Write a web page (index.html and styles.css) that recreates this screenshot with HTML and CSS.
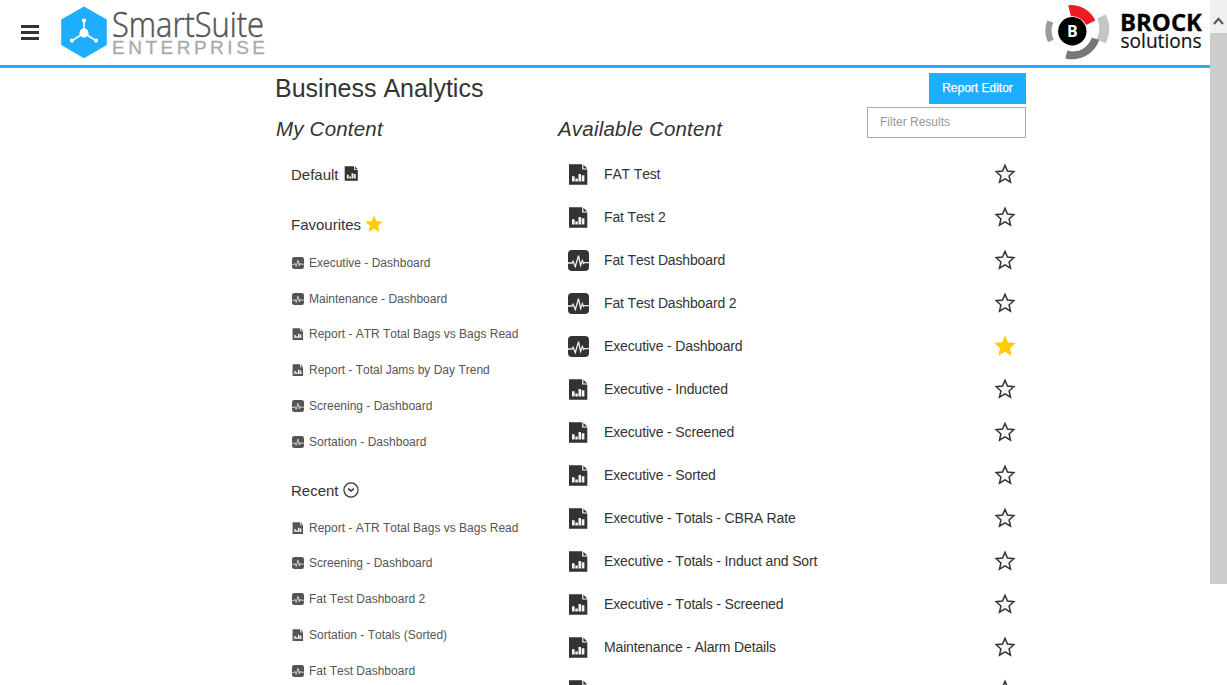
FILE: index.html
```html
<!DOCTYPE html>
<html lang="en">
<head>
<meta charset="utf-8">
<title>Business Analytics</title>
<link rel="stylesheet" href="styles.css">
</head>
<body>
<svg class="sprite" aria-hidden="true">
  <symbol id="doc" viewBox="0 0 21 21">
    <path d="M1 .3H14.2V5.6H19.3V20.8H1Z" fill="currentColor"/>
    <path d="M15.4 .8L19.3 4.6H15.4Z" fill="currentColor"/>
    <path d="M4 12.3H6.6V17.5H4ZM7.3 14.6H9.8V17.5H7.3ZM10.5 10H13V17.5H10.5ZM13.7 11.3H16.4V17.5H13.7Z" fill="#f4f4f4"/>
  </symbol>
  <symbol id="dash" viewBox="0 0 21 21">
    <rect width="21" height="21" rx="4" fill="currentColor"/>
    <path d="M0 13H4L5 11.2L7.3 16.5L10.5 5.6L12.6 15.5L14.4 10.6L15.6 13.5L16.6 12.6H21" fill="none" stroke="#eee" stroke-width="1.3"/>
  </symbol>
  <symbol id="star" viewBox="0 0 22 22">
    <path d="M11 2.4L13.5 8.1L19.8 8.7L15.1 12.9L16.5 19.2L11 15.9L5.5 19.2L6.9 12.9L2.2 8.7L8.5 8.1Z" stroke-width="1.5"/>
  </symbol>
</svg>
<header class="topbar">
  <div class="brand">
    <span class="menu"><i></i><i></i><i></i></span>
    <svg class="suite" width="206" height="58" viewBox="0 0 206 58">
      <path d="M24 3.5L46.8 16.5V42L24 55.3L1.2 42V16.5Z" fill="#1fadff"/>
      <g stroke="#fff" stroke-width="1.6" fill="#fff"><path d="M24 30V17M24 30L12.3 37.5M24 30L35.7 37.5"/><circle cx="24" cy="30" r="3.8"/><circle cx="24" cy="17.6" r="1.3"/><circle cx="12" cy="37.6" r="1.3"/><circle cx="36" cy="37.6" r="1.3"/></g>
      <text class="suite-name" x="52" y="33.5" textLength="152" lengthAdjust="spacingAndGlyphs">SmartSuite</text>
      <text class="suite-sub" x="52" y="50.5" textLength="153" lengthAdjust="spacing">ENTERPRISE</text>
    </svg>
  </div>
  <svg class="brock" width="170" height="62" viewBox="0 0 170 62">
    <path d="M27.3 5.2A27 27 0 0 1 54.3 20.5L45.2 25A15.5 15.5 0 0 0 29.8 16.3Z" fill="#ed1c24"/>
    <path d="M64.7 14.3A32 32 0 0 1 64.7 43.3L55.7 39.5A26 26 0 0 0 56.3 18.5Z" fill="#c3c5c7"/>
    <path d="M58.3 39.7A28.5 28.5 0 0 1 24.3 58.5L26.3 50.5A19.5 19.5 0 0 0 50.7 37.7Z" fill="#75777b"/>
    <path d="M6.3 20.5A27 27 0 0 0 7 42.2L12.7 39.7A21 21 0 0 1 12.2 22.5Z" fill="#999b9e"/>
    <circle cx="31.3" cy="31.3" r="14.2" fill="#000"/>
    <text class="brock-b" x="31.3" y="37" text-anchor="middle">B</text>
    <text class="brock-name" x="79" y="30.5" textLength="82" lengthAdjust="spacingAndGlyphs">BROCK</text>
    <text class="brock-sub" x="79.5" y="47.5" textLength="81" lengthAdjust="spacingAndGlyphs">solutions</text>
  </svg>
</header>
<aside class="scrollbar"><svg width="17" height="33"><path d="M4 24L8.5 18.8L13 24" fill="none" stroke="#555" stroke-width="2"/></svg><div class="thumb"></div></aside>
<main class="page">
  <section class="head">
    <div class="titles"><h1>Business Analytics</h1><div class="subs"><h2 class="mine">My Content</h2><h2 class="avail">Available Content</h2></div></div>
    <div class="tools"><button class="editor">Report Editor</button><input class="filter" placeholder="Filter Results"></div>
  </section>
  <div class="cols">
    <nav class="left">
      <h3 class="default"><span>Default</span> <svg class="i14"><use href="#doc"/></svg></h3>
      <h3 class="fav"><span>Favourites</span> <svg class="i17 gold"><use href="#star"/></svg></h3>
      <ul class="small">
        <li><svg><use href="#dash"/></svg><span>Executive - Dashboard</span></li>
        <li><svg><use href="#dash"/></svg><span>Maintenance - Dashboard</span></li>
        <li><svg><use href="#doc"/></svg><span>Report - ATR Total Bags vs Bags Read</span></li>
        <li><svg><use href="#doc"/></svg><span>Report - Total Jams by Day Trend</span></li>
        <li><svg><use href="#dash"/></svg><span>Screening - Dashboard</span></li>
        <li><svg><use href="#dash"/></svg><span>Sortation - Dashboard</span></li>
      </ul>
      <h3 class="recent"><span>Recent</span> <svg class="i16" viewBox="0 0 16 16"><circle cx="8" cy="8" r="7.1" fill="#f7f7f7" stroke="#333" stroke-width="1.2"/><path d="M5.2 6.7L8 9L10.8 6.7" fill="none" stroke="#333" stroke-width="1.5"/></svg></h3>
      <ul class="small">
        <li><svg><use href="#doc"/></svg><span>Report - ATR Total Bags vs Bags Read</span></li>
        <li><svg><use href="#dash"/></svg><span>Screening - Dashboard</span></li>
        <li><svg><use href="#dash"/></svg><span>Fat Test Dashboard 2</span></li>
        <li><svg><use href="#doc"/></svg><span>Sortation - Totals (Sorted)</span></li>
        <li><svg><use href="#dash"/></svg><span>Fat Test Dashboard</span></li>
      </ul>
    </nav>
    <ul class="big">
      <li><svg><use href="#doc"/></svg><span>FAT Test</span><svg class="star"><use href="#star"/></svg></li>
      <li><svg><use href="#doc"/></svg><span>Fat Test 2</span><svg class="star"><use href="#star"/></svg></li>
      <li><svg><use href="#dash"/></svg><span>Fat Test Dashboard</span><svg class="star"><use href="#star"/></svg></li>
      <li><svg><use href="#dash"/></svg><span>Fat Test Dashboard 2</span><svg class="star"><use href="#star"/></svg></li>
      <li><svg><use href="#dash"/></svg><span>Executive - Dashboard</span><svg class="star gold"><use href="#star"/></svg></li>
      <li><svg><use href="#doc"/></svg><span>Executive - Inducted</span><svg class="star"><use href="#star"/></svg></li>
      <li><svg><use href="#doc"/></svg><span>Executive - Screened</span><svg class="star"><use href="#star"/></svg></li>
      <li><svg><use href="#doc"/></svg><span>Executive - Sorted</span><svg class="star"><use href="#star"/></svg></li>
      <li><svg><use href="#doc"/></svg><span>Executive - Totals - CBRA Rate</span><svg class="star"><use href="#star"/></svg></li>
      <li><svg><use href="#doc"/></svg><span>Executive - Totals - Induct and Sort</span><svg class="star"><use href="#star"/></svg></li>
      <li><svg><use href="#doc"/></svg><span>Executive - Totals - Screened</span><svg class="star"><use href="#star"/></svg></li>
      <li><svg><use href="#doc"/></svg><span>Maintenance - Alarm Details</span><svg class="star"><use href="#star"/></svg></li>
      <li><svg><use href="#doc"/></svg><span></span><svg class="star"><use href="#star"/></svg></li>
    </ul>
  </div>
</main>
</body>
</html>
```
FILE: styles.css
```css
* { box-sizing: border-box; }
body { margin: 0; height: 685px; overflow: hidden; position: relative; background: #fff; color: #333; font-family: "Liberation Sans", Arial, sans-serif; font-kerning: none; }
h1, h2, h3, ul { margin: 0; padding: 0; font-weight: 400; }
ul { list-style: none; }
svg { flex: none; display: block; }
.sprite { position: absolute; width: 0; height: 0; }
.topbar { height: 68px; border-bottom: 3px solid #1fadff; padding: 0 17px 0 21px; display: flex; justify-content: space-between; }
.brand { display: flex; }
.menu { display: flex; flex-direction: column; gap: 3px; width: 18px; margin: 25px 21px 0 0; }
.menu i { height: 3px; background: #333; }
.suite { margin-top: 3px; overflow: visible; }
.suite-name { font: 300 34px "Open Sans", sans-serif; fill: #555; stroke: #555; stroke-width: .5px; }
.suite-sub { font: 19px "Liberation Sans", sans-serif; fill: #aaa; stroke: #aaa; stroke-width: .3px; }
.brock { margin-right: -1px; }
.brock-b { font: 700 16px "Open Sans", sans-serif; fill: #fff; }
.brock-name { font: 700 24px "Open Sans", sans-serif; fill: #000; stroke: #000; stroke-width: .3px; }
.brock-sub { font: 20px "Open Sans", sans-serif; fill: #111; stroke: #111; stroke-width: .2px; }
.scrollbar { position: absolute; right: 0; top: 0; width: 17px; height: 584px; background: #f0f0f0; }
.thumb { height: 551px; background: #cdcdcd; }
.page { width: 751px; margin-left: 275px; }
.head { height: 84px; display: flex; justify-content: space-between; }
h1 { font-size: 25px; line-height: 40px; letter-spacing: 0; white-space: nowrap; }
.subs { display: grid; grid-template-columns: 282px 1fr; }
h2 { padding-left: 1px; font-size: 20.5px; line-height: 42px; font-style: italic; letter-spacing: .2px; white-space: nowrap; }
.tools { padding-top: 5px; display: flex; flex-direction: column; align-items: flex-end; gap: 3px; }
.editor { width: 97px; height: 31px; border: 0; padding: 0 0 1px; background: #1fadff; color: #fff; font: 12px "Liberation Sans", sans-serif; white-space: nowrap; -webkit-text-stroke: .25px #fff; }
.filter { width: 159px; height: 31px; border: 1px solid #aaa; padding: 0 12px 1px; font: 12px "Liberation Sans", sans-serif; }
.filter::placeholder { color: #999; }
.cols { display: grid; grid-template-columns: 293px 1fr; }
.left { padding-left: 16px; }
h3 { display: flex; gap: 4px; align-items: center; font-size: 15px; line-height: 20px; }
.default { height: 48px; padding-bottom: 3px; }
.default svg { margin: 0 0 2px 1px; }
.fav { height: 45px; padding-top: 4px; }
.fav svg { margin-bottom: 1px; }
.recent { height: 50px; padding-top: 12px; }
.recent svg { margin-bottom: 2px; }
.i14 { width: 15px; height: 15px; }
.i17 { width: 18px; height: 18px; }
.i16 { width: 16px; height: 16px; }
.gold { fill: #fc0; stroke: #fc0; }
.small li { height: 35.8px; display: flex; align-items: center; gap: 5px; padding-left: 1px; font-size: 12px; color: #555; white-space: nowrap; }
.small svg { width: 12px; height: 12px; }
.big li { height: 43px; display: flex; align-items: center; font-size: 14px; letter-spacing: -.15px; padding-right: 10px; white-space: nowrap; }
.big svg { width: 21px; height: 21px; margin-top: 2px; }
.big span { flex: 1; margin-left: 15px; }
.big .star { width: 22px; height: 22px; margin: 0; fill: #f7f7f7; stroke: #333; }
.big .star.gold { fill: #fc0; stroke: #fc0; }
```
